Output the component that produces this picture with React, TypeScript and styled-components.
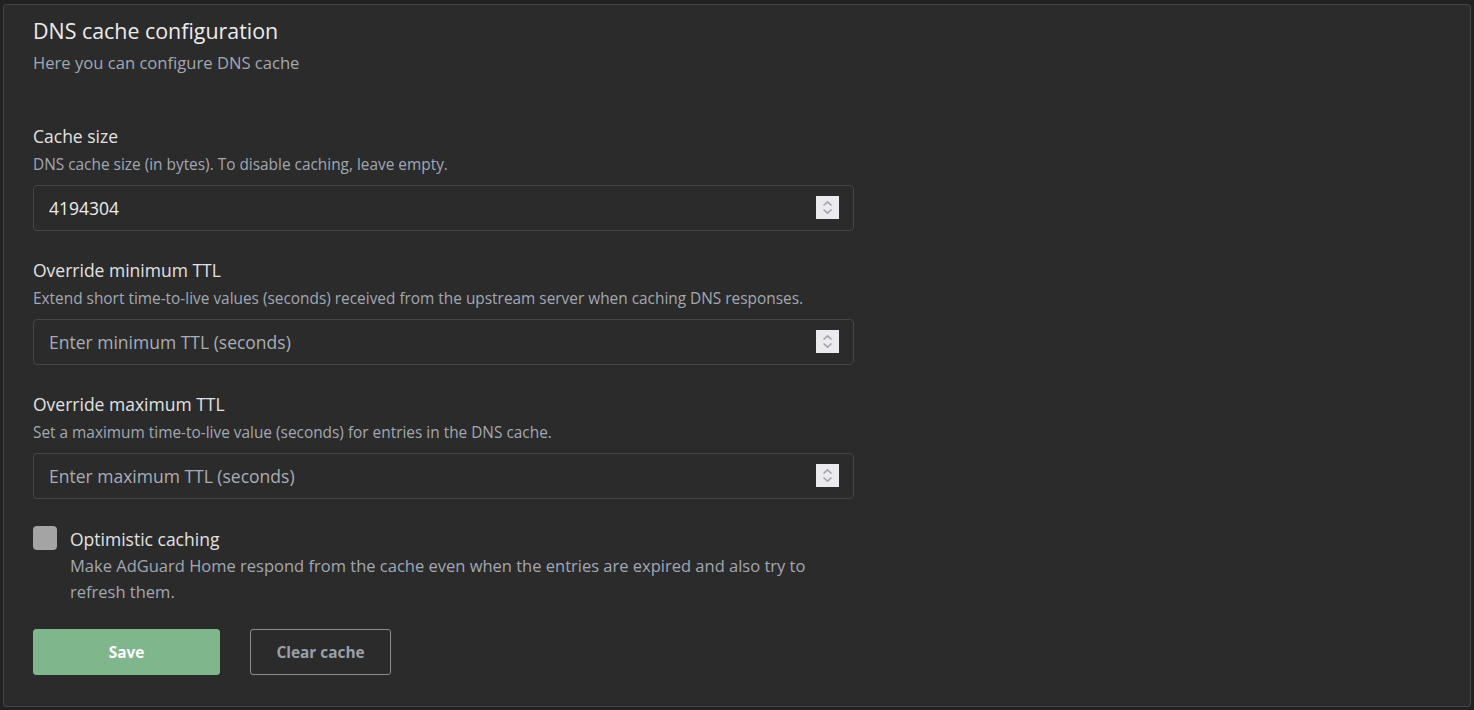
import * as React from 'react'
import styled, { createGlobalStyle } from 'styled-components'

const Global = createGlobalStyle`
  * {
    box-sizing: border-box;
  }

  html,
  body {
    margin: 0;
    padding: 0;
    background: #212121;
  }

  body {
    font-family: 'Open Sans', 'Noto Sans', sans-serif;
    color: #e4e4e4;
    overflow: hidden;
  }
`

const Page = styled.div`
  padding: 4px 3px 3px 3px;
  width: 1474px;
  height: 710px;
`

const Card = styled.section`
  height: 703px;
  background: #2b2b2b;
  border: 1px solid #444;
  border-radius: 3px;
  padding: 14px 29px 0 29px;
`

const Title = styled.h1`
  margin: 0;
  font-size: 21.4px;
  line-height: 24px;
  font-weight: 400;
  color: #ececec;
`

const Subtitle = styled.div`
  margin-top: 9px;
  font-size: 16.6px;
  line-height: 22px;
  color: #a2a8b3;
`

const Form = styled.div`
  margin-top: 50px;
  width: 821px;
  display: flex;
  flex-direction: column;
`

const Field = styled.div`
  display: flex;
  flex-direction: column;
  margin-bottom: 27px;
`

const Label = styled.label`
  font-size: 17.5px;
  line-height: 24px;
  color: #e2e2e2;
`

const Hint = styled.div`
  margin-top: 7px;
  font-size: 15.4px;
  line-height: 20px;
  color: #a2a8b3;
`

const InputWrap = styled.div`
  position: relative;
  margin-top: 10px;
  height: 46px;
`

const Input = styled.input`
  width: 100%;
  height: 100%;
  background: #2b2b2b;
  border: 1px solid #464646;
  border-radius: 4px;
  padding: 0 50px 0 15px;
  font-family: inherit;
  font-size: 17.5px;
  color: #ededed;
  outline: none;

  &::placeholder {
    color: #a9aeb6;
  }
`

const Spinner = styled.div`
  position: absolute;
  right: 15px;
  top: 11px;
  width: 23px;
  height: 23px;
  background: #ebebef;
  display: flex;
  align-items: center;
  justify-content: center;
`

const CheckRow = styled.div`
  display: flex;
  align-items: flex-start;
  gap: 13px;
  margin-top: 0;
`

const Box = styled.span`
  flex: none;
  width: 24px;
  height: 24px;
  border-radius: 4px;
  background: #a4a4a4;
`

const CheckText = styled.div`
  display: flex;
  flex-direction: column;
  margin-top: 1px;
`

const CheckHint = styled.div`
  margin-top: 2px;
  font-size: 16.5px;
  line-height: 26px;
  color: #a2a8b3;
  max-width: 760px;
`

const Actions = styled.div`
  display: flex;
  gap: 30px;
  margin-top: 24px;
`

const Button = styled.button<{ $primary?: boolean }>`
  height: 46px;
  width: ${(p) => (p.$primary ? '187px' : '141px')};
  border-radius: 3px;
  font-family: inherit;
  font-size: 15.4px;
  font-weight: 700;
  cursor: pointer;
  background: ${(p) => (p.$primary ? '#80b68c' : 'transparent')};
  color: ${(p) => (p.$primary ? '#ffffff' : '#9aa0aa')};
  border: 1px solid ${(p) => (p.$primary ? '#80b68c' : '#8c8c8c')};
`

const SpinIcon = () => (
  <svg width="11" height="15" viewBox="0 0 11 15" fill="none" stroke="#a2a2b0" strokeWidth="1.6">
    <path d="M1.5 5.5 L5.5 1.8 L9.5 5.5" />
    <path d="M1.5 9.5 L5.5 13.2 L9.5 9.5" />
  </svg>
)

const fields = [
  {
    label: 'Cache size',
    hint: 'DNS cache size (in bytes). To disable caching, leave empty.',
    value: '4194304',
    placeholder: 'Enter cache size (bytes)',
  },
  {
    label: 'Override minimum TTL',
    hint: 'Extend short time-to-live values (seconds) received from the upstream server when caching DNS responses.',
    value: '',
    placeholder: 'Enter minimum TTL (seconds)',
  },
  {
    label: 'Override maximum TTL',
    hint: 'Set a maximum time-to-live value (seconds) for entries in the DNS cache.',
    value: '',
    placeholder: 'Enter maximum TTL (seconds)',
  },
]

export default function App() {
  return (
    <Page>
      <Global />
      <Card>
        <Title>DNS cache configuration</Title>
        <Subtitle>Here you can configure DNS cache</Subtitle>
        <Form>
          {fields.map((f) => (
            <Field key={f.label}>
              <Label>{f.label}</Label>
              <Hint>{f.hint}</Hint>
              <InputWrap>
                <Input defaultValue={f.value} placeholder={f.placeholder} />
                <Spinner>
                  <SpinIcon />
                </Spinner>
              </InputWrap>
            </Field>
          ))}
          <CheckRow>
            <Box />
            <CheckText>
              <Label>Optimistic caching</Label>
              <CheckHint>
                Make AdGuard Home respond from the cache even when the entries are expired and also try to
                refresh them.
              </CheckHint>
            </CheckText>
          </CheckRow>
          <Actions>
            <Button $primary>Save</Button>
            <Button>Clear cache</Button>
          </Actions>
        </Form>
      </Card>
    </Page>
  )
}
